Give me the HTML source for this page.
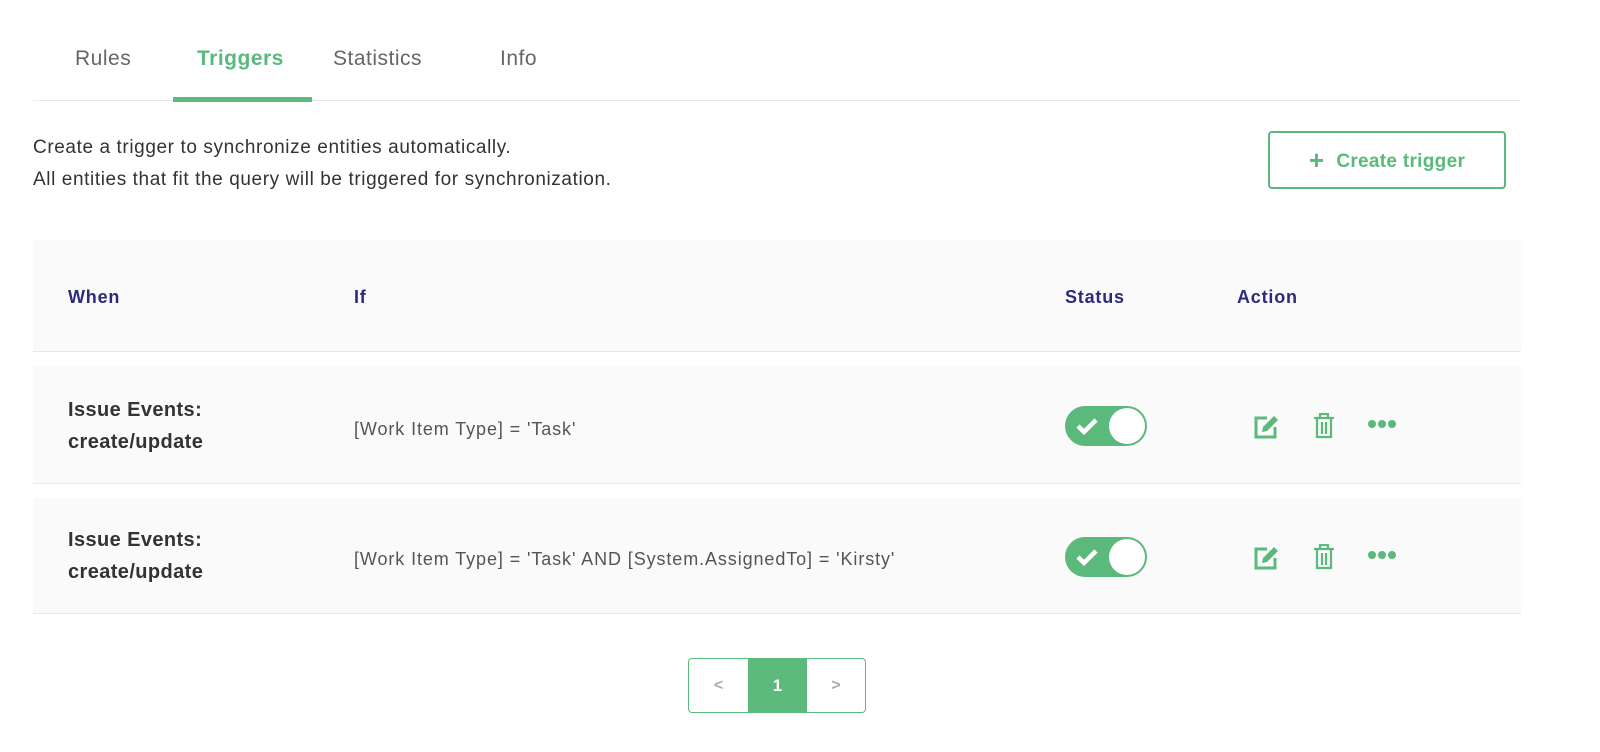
<!DOCTYPE html>
<html><head><style>
*{margin:0;padding:0;box-sizing:border-box}
body{width:1600px;height:752px;background:#fff;font-family:"Liberation Sans",sans-serif;position:relative;overflow:hidden;color:#333}
.a{position:absolute}
.tab{position:absolute;top:47px;font-size:21px;color:#666;letter-spacing:0.5px}
.g{color:#5bb97b}
.hd{font-size:18px;font-weight:bold;color:#2d2a7a;top:287px;letter-spacing:0.8px}
.when{font-size:20px;font-weight:bold;color:#333;line-height:32px;left:68px;letter-spacing:0.4px}
.if{font-size:18px;color:#555;left:354px;letter-spacing:0.9px}
.tog{position:absolute;left:1065px;width:82px;height:40px;border-radius:20px;background:#5bb97b}
.tog .k{position:absolute;right:2px;top:2px;width:36px;height:36px;border-radius:50%;background:#fff}
</style></head><body>
<div class="tab" style="left:75px">Rules</div>
<div class="tab g" style="left:197px;font-weight:bold">Triggers</div>
<div class="tab" style="left:333px">Statistics</div>
<div class="tab" style="left:500px">Info</div>
<div class="a" style="left:33px;top:100px;width:1488px;height:1px;background:#e8e8e8"></div>
<div class="a" style="left:173px;top:97px;width:139px;height:5px;background:#5bb97b"></div>
<div class="a" style="left:33px;top:132px;font-size:19px;letter-spacing:0.6px;line-height:32px;color:#333">Create a trigger to synchronize entities automatically.<br>All entities that fit the query will be triggered for synchronization.</div>
<div class="a" style="left:1268px;top:131px;width:238px;height:58px;border:2px solid #5bb97b;border-radius:4px;color:#5bb97b;font-weight:bold;font-size:19px;letter-spacing:0.3px;line-height:54px;text-align:center"><span style="font-size:26px;vertical-align:-2px;margin-right:12px">+</span>Create trigger</div>
<div class="a" style="left:33px;top:240px;width:1488px;height:112px;background:#fafafa;border-bottom:1px solid #e8e8e8"></div>
<div class="a hd" style="left:68px">When</div>
<div class="a hd" style="left:354px">If</div>
<div class="a hd" style="left:1065px">Status</div>
<div class="a hd" style="left:1237px">Action</div>
<div class="a" style="left:33px;top:366px;width:1488px;height:118px;background:#fafafa;border-bottom:1px solid #e8e8e8"></div>
<div class="a" style="left:33px;top:498px;width:1488px;height:116px;background:#fafafa;border-bottom:1px solid #e8e8e8"></div>
<div class="a when" style="top:394px">Issue Events:<br>create/update</div>
<div class="a if" style="top:419px">[Work Item Type] = 'Task'</div>
<div class="a when" style="top:524px">Issue Events:<br>create/update</div>
<div class="a if" style="top:549px">[Work Item Type] = 'Task' AND [System.AssignedTo] = 'Kirsty'</div>
<div class="tog" style="top:406px"><svg class="a" style="left:10px;top:10px" width="24" height="20" viewBox="0 0 24 20"><path d="M3 10l6 6L21 4" stroke="#fff" stroke-width="4.5" fill="none"/></svg><div class="k"></div></div>
<div class="tog" style="top:537px"><svg class="a" style="left:10px;top:10px" width="24" height="20" viewBox="0 0 24 20"><path d="M3 10l6 6L21 4" stroke="#fff" stroke-width="4.5" fill="none"/></svg><div class="k"></div></div>
<svg class="a" style="left:1253px;top:413px" width="28" height="28" viewBox="0 0 28 28"><path d="M14 5H3v19h19V14" stroke="#5bb97b" stroke-width="3" fill="none"/><path d="M9 19l1-5L21 3l4 4L14 18z" fill="#5bb97b"/></svg>
<svg class="a" style="left:1313px;top:413px" width="22" height="26" viewBox="0 0 22 26"><path d="M1 5h20M7 4V1h8v3M4 6v18h14V6M9 9v12M13 9v12" stroke="#5bb97b" stroke-width="2.2" fill="none"/></svg>
<svg class="a" style="left:1367px;top:418px" width="30" height="12"><circle cx="5" cy="6" r="4" fill="#5bb97b"/><circle cx="15" cy="6" r="4" fill="#5bb97b"/><circle cx="25" cy="6" r="4" fill="#5bb97b"/></svg>
<svg class="a" style="left:1253px;top:544px" width="28" height="28" viewBox="0 0 28 28"><path d="M14 5H3v19h19V14" stroke="#5bb97b" stroke-width="3" fill="none"/><path d="M9 19l1-5L21 3l4 4L14 18z" fill="#5bb97b"/></svg>
<svg class="a" style="left:1313px;top:544px" width="22" height="26" viewBox="0 0 22 26"><path d="M1 5h20M7 4V1h8v3M4 6v18h14V6M9 9v12M13 9v12" stroke="#5bb97b" stroke-width="2.2" fill="none"/></svg>
<svg class="a" style="left:1367px;top:549px" width="30" height="12"><circle cx="5" cy="6" r="4" fill="#5bb97b"/><circle cx="15" cy="6" r="4" fill="#5bb97b"/><circle cx="25" cy="6" r="4" fill="#5bb97b"/></svg>
<div class="a" style="left:688px;top:658px;width:178px;height:55px;border:1px solid #5bb97b;border-radius:4px;overflow:hidden;display:flex">
<div style="width:59px;text-align:center;line-height:53px;color:#aaa;font-weight:bold;font-size:16px">&lt;</div>
<div style="width:59px;text-align:center;line-height:53px;color:#fff;background:#5bb97b;font-weight:bold;font-size:17px">1</div>
<div style="width:58px;text-align:center;line-height:53px;color:#aaa;font-weight:bold;font-size:16px">&gt;</div>
</div>
</body></html>
